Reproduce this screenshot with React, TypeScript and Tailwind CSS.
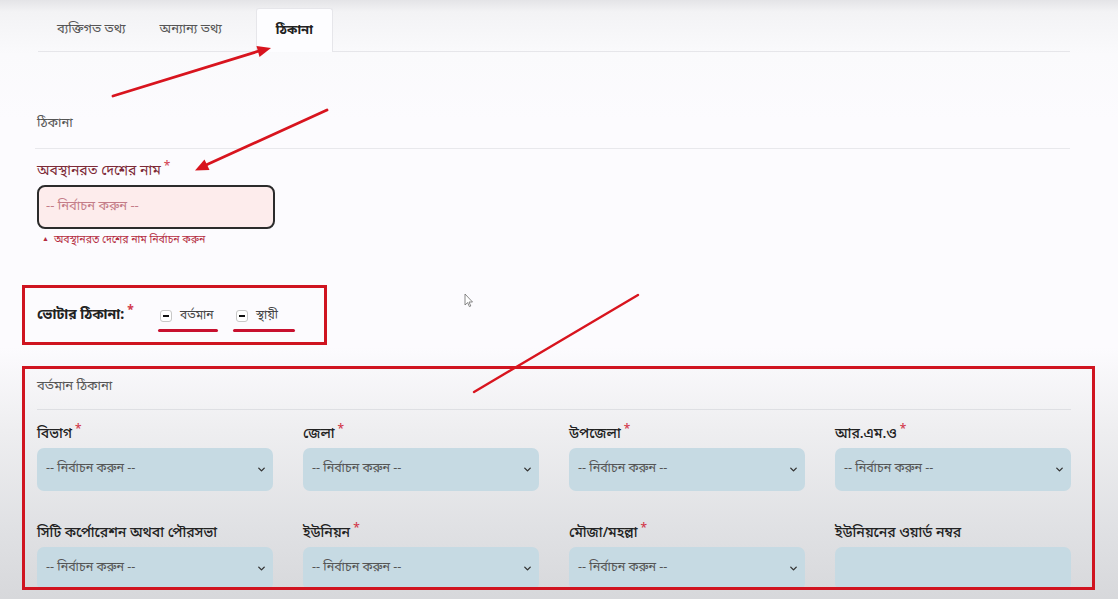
import { ChevronDown } from "lucide-react";

const font = "font-['Noto_Sans_Bengali','Noto_Sans','Lohit_Bengali',sans-serif]";

const fields = [
  { label: "বিভাগ", required: true, select: true },
  { label: "জেলা", required: true, select: true },
  { label: "উপজেলা", required: true, select: true },
  { label: "আর.এম.ও", required: true, select: true },
  { label: "সিটি কর্পোরেশন অথবা পৌরসভা", required: false, select: true },
  { label: "ইউনিয়ন", required: true, select: true },
  { label: "মৌজা/মহল্লা", required: true, select: true },
  { label: "ইউনিয়নের ওয়ার্ড নম্বর", required: false, select: false },
];

function Annotations() {
  return (
    <svg
      className="pointer-events-none absolute inset-0"
      width="1118"
      height="599"
      viewBox="0 0 1118 599"
    >
      {/* arrow to the active tab */}
      <line x1="113" y1="96" x2="259" y2="51" stroke="#d8141e" strokeWidth="2.8" strokeLinecap="round" />
      <polygon points="271,48 259.5,57 256.5,46" fill="#d8141e" />
      {/* arrow to country label */}
      <line x1="327" y1="110" x2="206" y2="165" stroke="#d8141e" strokeWidth="2.8" strokeLinecap="round" />
      <polygon points="195,170.5 209.5,170 204.5,159.5" fill="#d8141e" />
      {/* diagonal stroke */}
      <line x1="638" y1="295" x2="474" y2="392" stroke="#d8141e" strokeWidth="2.4" strokeLinecap="round" />
      {/* mouse cursor */}
      <path
        d="M465 294 L465 305 L467.6 302.6 L469.4 306.6 L470.8 306 L469 302 L472.5 302 Z"
        fill="#ffffff"
        stroke="#6b6b6b"
        strokeWidth="0.8"
        strokeLinejoin="round"
      />
    </svg>
  );
}

function Required() {
  return <span className="relative -top-[5px] ml-[3px] text-[12px] text-[#d23a4c]">*</span>;
}

function Check({ label, pad, width }: { label: string; pad: string; width: string }) {
  return (
    <div className={`flex flex-col pt-[8px] ${width}`}>
      <label className={`flex items-center gap-[8px] whitespace-nowrap text-[12px] text-[#444] ${pad}`}>
        <span className="flex h-[12px] w-[12px] shrink-0 items-center justify-center rounded-[3px] border border-[#c8c8c8] bg-white">
          <span className="h-[2px] w-[6px] bg-[#111]" />
        </span>
        {label}
      </label>
      <span className="mt-[4px] h-[3px] w-full rounded-full bg-[#c8102e]" />
    </div>
  );
}

export default function App() {
  return (
    <div
      className={`relative h-[599px] w-[1118px] overflow-hidden bg-[linear-gradient(to_bottom,#e4e4e7_0%,#f3f3f5_2%,#fafafc_9%,#fcfbfe_20%,#fcfbfe_58%,#eeeef0_72%,#e0e1e4_88%,#d7d8db_100%)] ${font}`}
    >
      {/* tabs */}
      <div className="ml-[38px] mt-[8px] flex w-[1032px] border-b border-[#e6e6ea] text-[13px]">
        <div className="flex h-[43px] items-center px-[19px] text-[#555]">ব্যক্তিগত তথ্য</div>
        <div className="flex h-[43px] items-center px-[15px] text-[#555]">অন্যান্য তথ্য</div>
        <div className="-mb-px ml-[19px] flex h-[44px] items-center rounded-t-[3px] border border-b-0 border-[#e6e6ea] bg-[#fdfdff] px-[19px] font-bold text-[#222]">
          ঠিকানা
        </div>
      </div>

      {/* address header */}
      <div className="ml-[35px] mt-[62px] w-[1035px] border-b border-[#e8e8ec] pb-[14px] pl-[2px] text-[13px] text-[#555]">
        ঠিকানা
      </div>

      {/* country of residence */}
      <div className="ml-[37px] mt-[13px]">
        <div className="text-[14px] leading-[20px] text-[#7d2a37]">
          অবস্থানরত দেশের নাম
          <Required />
        </div>
        <div className="mt-[3px] flex h-[44px] w-[238px] items-center rounded-[8px] border-2 border-[#2b2b2b] bg-[#fdecec] px-[7px] text-[13px] text-[#c47d88]">
          -- নির্বাচন করুন --
        </div>
        <div className="mt-[4px] flex items-center gap-[5px] pl-[5px] text-[10.5px] text-[#b42b3e]">
          <span className="text-[7px]">▲</span>
          অবস্থানরত দেশের নাম নির্বাচন করুন
        </div>
      </div>

      {/* voter address */}
      <div className="ml-[22px] mt-[37px] flex h-[60px] w-[305px] items-center border-[3px] border-[#cf1420] pl-[12px]">
        <div className="w-[121px] text-[14px] font-bold text-[#222]">
          ভোটার ঠিকানা:
          <Required />
        </div>
        <Check label="বর্তমান" pad="pl-[2px]" width="w-[60px]" />
        <div className="w-[15px]" />
        <Check label="স্থায়ী" pad="pl-[3px]" width="w-[62px]" />
      </div>

      {/* present address */}
      <div className="ml-[22px] mt-[21px] h-[224px] w-[1073px] overflow-hidden border-[3px] border-[#d01420] pl-[12px] pr-[21px]">
        <div className="border-b border-[#dedfe3] pb-[12px] pt-[8px] text-[13px] text-[#555]">বর্তমান ঠিকানা</div>
        <div className="mt-[15px] grid grid-cols-4 gap-x-[30px] gap-y-[33px]">
          {fields.map((f) => (
            <div key={f.label}>
              <div className="h-[20px] text-[14px] font-medium leading-[20px] text-[#222]">
                {f.label}
                {f.required && <Required />}
              </div>
              <div className="mt-[3px] flex h-[43px] items-center justify-between rounded-[7px] bg-[#c6dae3] pl-[9px] pr-[6px] text-[12.5px] text-[#555]">
                {f.select && (
                  <>
                    <span>-- নির্বাচন করুন --</span>
                    <ChevronDown size={11} strokeWidth={3} className="text-[#333]" />
                  </>
                )}
              </div>
            </div>
          ))}
        </div>
      </div>

      <Annotations />
    </div>
  );
}
